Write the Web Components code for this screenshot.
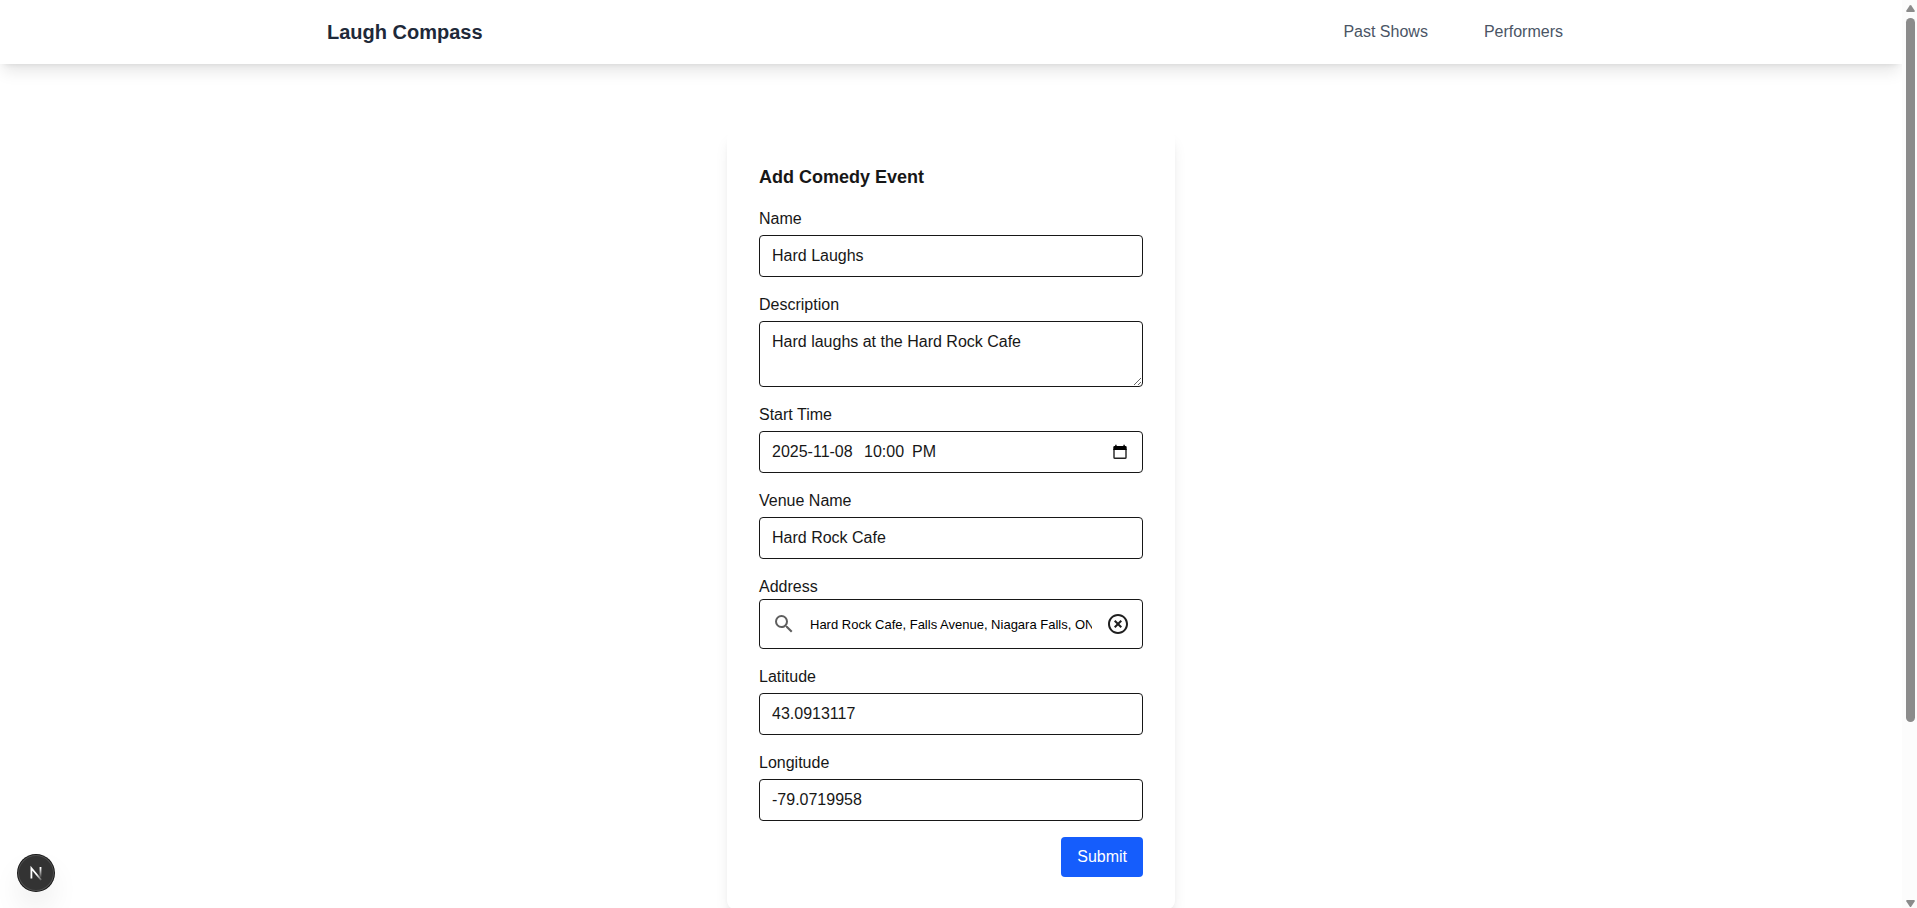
<!DOCTYPE html>
<html lang="en">
<head>
<meta charset="utf-8">
<meta name="viewport" content="width=device-width, initial-scale=1">
<title>Laugh Compass</title>
<style>
  body { margin: 0; background: #fff; color: #171717; font: 16px/24px "Liberation Sans", Arial, Helvetica, sans-serif; }
</style>
</head>
<body>
<page-shell>
  <site-header brand="Laugh Compass">
    <nav-link href="#past-shows">Past Shows</nav-link>
    <nav-link href="#performers">Performers</nav-link>
  </site-header>
  <event-card heading="Add Comedy Event">
    <text-field label="Name" value="Hard Laughs"></text-field>
    <text-field label="Description" value="Hard laughs at the Hard Rock Cafe" multiline></text-field>
    <date-field label="Start Time" date="2025-11-08" time="10:00" period="PM"></date-field>
    <text-field label="Venue Name" value="Hard Rock Cafe"></text-field>
    <address-field label="Address" value="Hard Rock Cafe, Falls Avenue, Niagara Falls, ON, Canada"></address-field>
    <text-field label="Latitude" value="43.0913117"></text-field>
    <text-field label="Longitude" value="-79.0719958"></text-field>
    <submit-button slot="actions">Submit</submit-button>
  </event-card>
</page-shell>
<dev-badge></dev-badge>

<script>
const define = (name, render) => customElements.define(name, class extends HTMLElement {
  constructor() {
    super();
    this.attachShadow({ mode: 'open' });
  }
  connectedCallback() {
    this.shadowRoot.innerHTML = '<style>*{box-sizing:border-box}</style>' + render(this);
  }
});

const fieldStyles = `
  :host { display: block; }
  label { display: block; line-height: 24px; }
  input, textarea {
    display: block; width: 100%; margin: 4px 0 0; padding: 8px 12px;
    border: 1px solid #171717; border-radius: 4px; background: transparent;
    color: inherit; font: inherit; line-height: 24px;
  }
  input { height: 42px; }
  textarea { height: 66px; resize: vertical; }
`;

define('page-shell', () => `
  <style>
    :host { display: grid; grid-template-columns: minmax(0, 1fr) 15px; height: 100vh; }
    .view { overflow-y: auto; scrollbar-width: none; padding-bottom: 220px; }
  </style>
  <div class="view"><slot></slot></div>
  <scroll-rail></scroll-rail>`);

define('scroll-rail', () => `
  <style>
    :host { display: flex; flex-direction: column; gap: 6px; padding: 5px 2px 1px 4px; background: #fcfcfc; }
    svg { display: block; width: 9px; height: 7px; fill: #8b8b8b; }
    .track { flex: 1; display: grid; grid-template-rows: 41fr 10fr; }
    .thumb { border-radius: 5px; background: #8b8b8b; }
  </style>
  <svg viewBox="0 0 9 7" aria-hidden="true"><path d="M3.700.6Q4.500-.4 5.300.6L8.800 5.700Q9 7 8 7H1Q0 7 .2 5.700Z"/></svg>
  <div class="track"><div class="thumb"></div></div>
  <svg viewBox="0 0 9 7" aria-hidden="true"><path d="M3.700 6.400Q4.500 7.400 5.300 6.400L8.800 1.300Q9 0 8 0H1Q0 0 .2 1.300Z"/></svg>`);

define('site-header', el => `
  <style>
    :host {
      display: block; background: #fff;
      box-shadow: 0 10px 15px -3px rgba(0,0,0,.1), 0 4px 6px -4px rgba(0,0,0,.1);
    }
    header { display: flex; align-items: center; justify-content: space-between; max-width: 1280px; height: 64px; margin: 0 auto; padding: 0 16px; }
    .brand { color: #1e2939; font-size: 20px; font-weight: 700; line-height: 28px; text-decoration: none; }
    nav { display: flex; gap: 32px; }
  </style>
  <header>
    <a class="brand" href="#home">${el.getAttribute('brand')}</a>
    <nav aria-label="Main"><slot></slot></nav>
  </header>`);

define('nav-link', el => `
  <style>
    :host { display: block; }
    a { display: block; padding: 8px 12px; color: #4a5565; text-decoration: none; }
  </style>
  <a href="${el.getAttribute('href')}"><slot></slot></a>`);

define('event-card', el => `
  <style>
    :host { display: block; padding-top: 67px; }
    form {
      display: flex; flex-direction: column; gap: 16px; max-width: 448px; margin: 0 auto; padding: 32px;
      border-radius: 8px; background: #fff;
      box-shadow: 0 10px 15px -3px rgba(0,0,0,.1), 0 4px 6px -4px rgba(0,0,0,.1);
    }
    h2 { margin: 0; font-size: 18px; font-weight: 700; line-height: 28px; }
    .actions { display: flex; justify-content: flex-end; }
  </style>
  <form onsubmit="return false">
    <h2>${el.getAttribute('heading')}</h2>
    <slot></slot>
    <div class="actions"><slot name="actions"></slot></div>
  </form>`);

define('text-field', el => `
  <style>${fieldStyles}</style>
  <label for="control">${el.getAttribute('label')}</label>
  ${el.hasAttribute('multiline')
    ? `<textarea id="control" rows="2">${el.getAttribute('value')}</textarea>`
    : `<input id="control" type="text" value="${el.getAttribute('value')}">`}`);

define('date-field', el => `
  <style>${fieldStyles}
    .box { display: flex; align-items: center; height: 42px; margin-top: 4px; padding: 0 14px 0 12px; border: 1px solid #171717; border-radius: 4px; }
    .box input { height: 40px; margin: 0; padding: 0; border: 0; }
    .date { width: 92px; }
    .time { width: 48px; }
    .period { width: 32px; }
    button { margin-left: auto; padding: 0; border: 0; background: none; }
    svg { display: block; width: 16px; height: 16px; }
  </style>
  <label for="control">${el.getAttribute('label')}</label>
  <div class="box">
    <input id="control" class="date" type="text" value="${el.getAttribute('date')}">
    <input class="time" type="text" aria-label="Time" value="${el.getAttribute('time')}">
    <input class="period" type="text" aria-label="AM or PM" value="${el.getAttribute('period')}">
    <button type="button" aria-label="Choose date">
      <svg viewBox="0 0 16 16"><path fill="none" stroke="#222" stroke-width="1.400" d="M2 5V13.400Q2 14.300 3 14.300H13Q14 14.300 14 13.400V5"/><path d="M1.300 6V3.300Q1.300 2 2.600 2H3.200V.7H4.600V2H11.400V.7H12.800V2H13.400Q14.700 2 14.700 3.300V6Z"/></svg>
    </button>
  </div>`);

define('address-field', el => `
  <style>${fieldStyles}
    .box { display: flex; align-items: center; height: 50px; padding: 0 12px; border: 1px solid #171717; border-radius: 4px; }
    .box input { flex: 1; min-width: 0; height: 48px; margin: 0 14px; padding: 0; border: 0; color: #000; font-size: 13px; }
    button { padding: 0; border: 0; background: none; }
    svg { display: block; flex: none; width: 24px; height: 24px; }
  </style>
  <label for="control">${el.getAttribute('label')}</label>
  <div class="box">
    <svg viewBox="0 0 24 24" fill="#5e5e5e" aria-hidden="true"><path d="M15.500 14h-.79l-.28-.27A6.471 6.471 0 0 0 16 9.500 6.500 6.500 0 1 0 9.500 16c1.610 0 3.090-.59 4.230-1.570l.27.28v.79l5 4.990L20.490 19l-4.990-5zm-6 0C7.010 14 5 11.990 5 9.500S7.010 5 9.500 5 14 7.010 14 9.500 11.990 14 9.500 14z"/></svg>
    <input id="control" type="text" value="${el.getAttribute('value')}">
    <button type="button" aria-label="Clear address">
      <svg viewBox="0 0 24 24" fill="#1f1f1f"><path d="M14.590 8L12 10.590 9.410 8 8 9.410 10.590 12 8 14.590 9.410 16 12 13.410 14.590 16 16 14.590 13.410 12 16 9.410 14.590 8zM12 2C6.470 2 2 6.470 2 12s4.470 10 10 10 10-4.470 10-10S17.530 2 12 2zm0 18c-4.410 0-8-3.590-8-8s3.590-8 8-8 8 3.590 8 8-3.590 8-8 8z"/></svg>
    </button>
  </div>`);

define('submit-button', () => `
  <style>
    :host { display: block; }
    button { display: block; padding: 8px 16px; border: 0; border-radius: 4px; background: #155dfc; color: #fff; font: inherit; }
  </style>
  <button type="submit"><slot></slot></button>`);

define('dev-badge', () => `
  <style>
    :host { display: block; position: fixed; left: 18px; bottom: 17px; }
    button {
      display: grid; place-items: center; width: 36px; height: 36px; padding: 0; border: 0; border-radius: 50%; background: #333;
      box-shadow: 0 0 0 1px #171717, inset 0 0 0 1px rgba(255,255,255,.14), 0 16px 32px -8px rgba(0,0,0,.24);
    }
    svg { display: block; width: 14px; height: 16px; }
  </style>
  <button type="button" aria-label="Open developer tools">
    <svg viewBox="0 0 14 16" fill="none" stroke-width="1.800">
      <defs>
        <linearGradient id="stem" x1="0" y1="3" x2="0" y2="13" gradientUnits="userSpaceOnUse"><stop stop-color="#fff"/><stop offset="1" stop-color="#fff" stop-opacity="0"/></linearGradient>
        <linearGradient id="slash" x1="8" y1="9" x2="14" y2="16" gradientUnits="userSpaceOnUse"><stop stop-color="#fff"/><stop offset="1" stop-color="#fff" stop-opacity="0"/></linearGradient>
      </defs>
      <path stroke="url(#stem)" d="M11.500 2V12"/>
      <path stroke="url(#slash)" d="M2.400 13.500V3.200L12.200 15"/>
    </svg>
  </button>`);
</script>
</body>
</html>
